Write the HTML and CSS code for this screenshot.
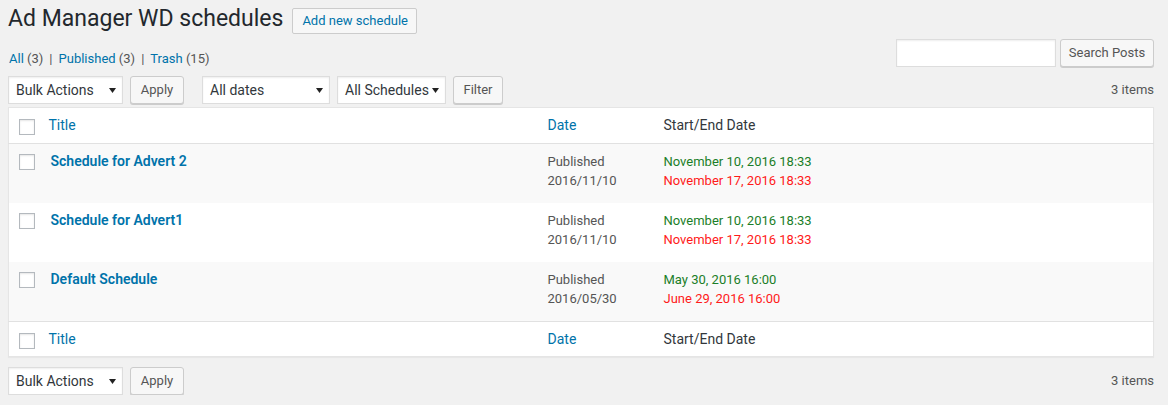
FILE: index.html
```html
<!DOCTYPE html>
<html>
<head>
<meta charset="utf-8">
<link rel="stylesheet" href="styles.css">
</head>
<body>
<div class="wrap">
  <div class="head">
    <h1>Ad Manager WD schedules</h1>
    <a class="page-action">Add new schedule</a>
  </div>
  <div class="sub-row">
    <ul class="subsubsub">
      <li><a>All <span class="count">(3)</span></a><span class="sep">|</span></li>
      <li><a>Published <span class="count">(3)</span></a><span class="sep">|</span></li>
      <li><a>Trash <span class="count">(15)</span></a></li>
    </ul>
    <div class="search-box">
      <span class="search-input"></span>
      <span class="button b-search">Search Posts</span>
    </div>
  </div>
  <div class="tablenav top">
    <div class="actions">
      <span class="select w-bulk"><span>Bulk Actions</span><svg class="arr" width="7" height="5" viewBox="0 0 7 5"><path d="M0 0h7L3.5 5z"/></svg></span>
      <span class="button b-apply">Apply</span>
    </div>
    <div class="actions">
      <span class="select w-dates"><span>All dates</span><svg class="arr" width="7" height="5" viewBox="0 0 7 5"><path d="M0 0h7L3.5 5z"/></svg></span>
      <span class="select w-sched"><span>All Schedules</span><svg class="arr" width="7" height="5" viewBox="0 0 7 5"><path d="M0 0h7L3.5 5z"/></svg></span>
      <span class="button b-filter">Filter</span>
    </div>
    <div class="num">3 items</div>
  </div>
  <table class="list">
    <thead>
      <tr>
        <th class="cb"><span class="check"></span></th>
        <th class="c-title"><a>Title</a></th>
        <th class="c-date"><a>Date</a></th>
        <th class="c-se">Start/End Date</th>
      </tr>
    </thead>
    <tbody>
      <tr class="alt">
        <td class="cb"><span class="check"></span></td>
        <td class="c-title"><a class="row-title">Schedule for Advert 2</a></td>
        <td class="c-date">Published<br>2016/11/10</td>
        <td class="c-se"><span class="start">November 10, 2016 18:33</span><br><span class="end">November 17, 2016 18:33</span></td>
      </tr>
      <tr>
        <td class="cb"><span class="check"></span></td>
        <td class="c-title"><a class="row-title">Schedule for Advert1</a></td>
        <td class="c-date">Published<br>2016/11/10</td>
        <td class="c-se"><span class="start">November 10, 2016 18:33</span><br><span class="end">November 17, 2016 18:33</span></td>
      </tr>
      <tr class="alt">
        <td class="cb"><span class="check"></span></td>
        <td class="c-title"><a class="row-title">Default Schedule</a></td>
        <td class="c-date">Published<br>2016/05/30</td>
        <td class="c-se"><span class="start">May 30, 2016 16:00</span><br><span class="end">June 29, 2016 16:00</span></td>
      </tr>
    </tbody>
    <tfoot>
      <tr>
        <th class="cb"><span class="check"></span></th>
        <th class="c-title"><a>Title</a></th>
        <th class="c-date"><a>Date</a></th>
        <th class="c-se">Start/End Date</th>
      </tr>
    </tfoot>
  </table>
  <div class="tablenav bottom">
    <div class="actions">
      <span class="select w-bulk"><span>Bulk Actions</span><svg class="arr" width="7" height="5" viewBox="0 0 7 5"><path d="M0 0h7L3.5 5z"/></svg></span>
      <span class="button b-apply">Apply</span>
    </div>
    <div class="num">3 items</div>
  </div>
</div>
</body>
</html>
```
FILE: styles.css
```css
html, body {
  margin: 0;
  padding: 0;
  background: #f1f1f1;
}
body {
  font-family: "Segoe UI", Roboto, "Liberation Sans", sans-serif;
  font-size: 13px;
  line-height: 1.5;
  color: #444;
}
a {
  color: #0073aa;
  text-decoration: none;
}
.wrap {
  padding: 0 14px 0 8px;
}
.head {
  display: flex;
  align-items: flex-start;
  padding-top: 4px;
}
h1 {
  margin: 0;
  font-size: 23px;
  font-weight: 400;
  line-height: 29px;
  color: #23282d;
}
.page-action {
  margin: 4px 0 0 9px;
  height: 24px;
  padding: 0 8px 0 9px;
  display: flex;
  align-items: center;
  border: 1px solid #ccc;
  border-radius: 2px;
  background: #f7f7f7;
  color: #0073aa;
  font-size: 13px;
  white-space: nowrap;
}
.sub-row {
  display: flex;
  justify-content: space-between;
  align-items: flex-start;
  margin-top: 5px;
}
.subsubsub {
  list-style: none;
  margin: 10px 0 0 1px;
  padding: 0;
  display: flex;
  line-height: 20px;
  color: #666;
}
.subsubsub .count {
  color: #555;
}
.subsubsub .sep {
  color: #555;
  margin: 0 6px 0 6px;
}
.search-box {
  display: flex;
  gap: 4px;
}
.search-input {
  width: 158px;
  height: 26px;
  border: 1px solid #ddd;
  background: #fff;
  box-shadow: inset 0 1px 2px rgba(0,0,0,.07);
}
.button {
  display: inline-flex;
  align-items: center;
  justify-content: center;
  box-sizing: border-box;
  height: 28px;
  padding: 0 0 1px;
  border: 1px solid #ccc;
  border-radius: 3px;
  background: #f7f7f7;
  box-shadow: 0 1px 0 #ccc;
  color: #555;
  font-size: 13px;
  white-space: nowrap;
}
.b-search { width: 94px; }
.b-apply { width: 54px; }
.b-filter { width: 50px; }
.tablenav {
  display: flex;
  align-items: center;
  height: 28px;
}
.tablenav.top {
  margin-top: 7px;
}
.tablenav.bottom {
  margin-top: 10px;
}
.actions {
  display: flex;
  align-items: center;
  gap: 7px;
  margin-right: 18px;
}
.num {
  margin-left: auto;
  color: #555;
}
.select {
  display: flex;
  align-items: center;
  justify-content: space-between;
  box-sizing: border-box;
  height: 28px;
  padding: 1px 6px 0 7px;
  border: 1px solid #ddd;
  background: #fff;
  box-shadow: inset 0 1px 2px rgba(0,0,0,.07);
  color: #32373c;
  font-size: 14px;
}
.select .arr {
  fill: #222;
  margin-top: -1px;
}
.w-bulk { width: 115px; }
.w-dates { width: 128px; }
.w-sched { width: 109px; }
.list {
  margin-top: 3px;
  width: 100%;
  border-collapse: collapse;
  border: 1px solid #e5e5e5;
  background: #fff;
  box-shadow: 0 1px 1px rgba(0,0,0,.04);
  table-layout: fixed;
}
.list th, .list td {
  text-align: left;
  vertical-align: top;
  font-weight: 400;
  font-size: 13px;
  line-height: 19.5px;
}
.list th {
  padding: 8px 10px 7px;
  color: #32373c;
  font-size: 14px;
}
.list th a {
  font-size: 14px;
}
.list thead th {
  border-bottom: 1px solid #e1e1e1;
}
.list tfoot th {
  border-top: 1px solid #e1e1e1;
}
.list td {
  padding: 8px 10px 12px;
  color: #555;
}
.list tr.alt td {
  background: #f9f9f9;
}
.list .cb {
  width: 30px;
  box-sizing: border-box;
  padding: 10px 0 0 10px;
}
.list td.cb {
  padding-top: 10px;
}
.list th.cb {
  padding-top: 11px;
  padding-bottom: 7px;
}
.check {
  display: block;
  width: 14px;
  height: 14px;
  border: 1px solid #b4b9be;
  background: #fff;
  box-shadow: inset 0 1px 2px rgba(0,0,0,.1);
}
.c-title { width: 499px; box-sizing: border-box; }
.c-date { width: 116px; box-sizing: border-box; }
.row-title {
  font-weight: 600;
  font-size: 14px;
  padding-left: 2px;
}
.start { color: #1b7e28; }
.end { color: #ff1a1a; }
```
